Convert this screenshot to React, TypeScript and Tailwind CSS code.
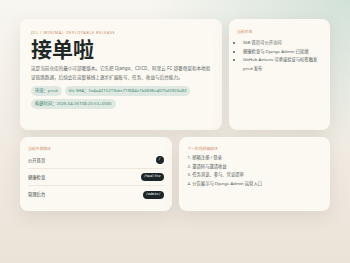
export default function App() {
  const chips = [
    "环境：prod",
    "Git SHA：5e4a4215219cbc71f684e1b0696c4075d3903a82",
    "构建时间：2026-04-05T08:25:53+0000",
  ];
  const paths = [
    { name: "公开首页", path: "/" },
    { name: "健康检查", path: "/healthz" },
    { name: "管理后台", path: "/admin/" },
  ];
  const modules = [
    "邮箱注册 / 登录",
    "邀请码与邀请收益",
    "任务浏览、参与、凭证提审",
    "公告展示与 Django Admin 运营入口",
  ];

  return (
    <div className="min-h-screen w-full px-[20px] pt-[19px] font-['Noto_Sans','Noto_Sans_CJK_SC',sans-serif] text-[#2a3331] bg-[radial-gradient(ellipse_at_100%_0%,#d2e1d8_0%,rgba(210,225,216,0)_40%),linear-gradient(180deg,#f8f6f1_0%,#f1ebe3_55%,#ebe3d8_100%)]">
      <div className="grid grid-cols-[2fr_1fr] gap-[7px]">
        <div className="h-[111px] rounded-[8px] bg-[#fcf9f3] px-[11px] pt-[11px] shadow-[0_6px_18px_rgba(110,90,70,0.13)]">
          <div className="text-[3.8px] leading-[5px] tracking-[0.15em] uppercase text-[#cf8c63]">
            JDL / Minimal deployable release
          </div>
          <h1 className="mt-[1px] text-[21px] leading-[26px] font-bold text-[#1e2827]">接单啦</h1>
          <p className="mt-[2px] text-[4.6px] leading-[8.5px] text-[#5d6663]">
            这是当前仓库的最小可部署版本。它先把 Django、CI/CD、阿里云 FC 部署骨架和本地验证链路跑通，后续会在这套基线上逐步扩展账号、任务、收益与后台能力。
          </p>
          <div className="mt-[5px] flex flex-wrap gap-[3px]">
            {chips.map((c) => (
              <span
                key={c}
                className="flex h-[10px] items-center rounded-full bg-[#dfe9e2] px-[4px] text-[4.2px] tracking-[0.1px] text-[#3b8572]"
              >
                {c}
              </span>
            ))}
          </div>
        </div>

        <div className="h-[111px] rounded-[8px] bg-[#fcf9f3] px-[8px] pt-[10px] shadow-[0_6px_18px_rgba(110,90,70,0.13)]">
          <div className="text-[3.8px] leading-[5px] text-[#cf8c63]">当前状态</div>
          <ul className="mt-[4px] list-disc pl-[6px] text-[4.3px] leading-[8.5px] text-[#4f5957]">
            <li>SSR 首页可公开访问</li>
            <li>健康检查与 Django Admin 已就绪</li>
            <li>GitHub Actions 可承接验证与标签触发 prod 发布</li>
          </ul>
        </div>
      </div>

      <div className="mt-[7px] grid grid-cols-2 gap-[7px]">
        <div className="h-[74px] rounded-[8px] bg-[#fcf9f3] px-[8px] pt-[9px] shadow-[0_6px_18px_rgba(110,90,70,0.13)]">
          <div className="text-[3.8px] leading-[5px] text-[#cf8c63]">当前开放路径</div>
          <div className="mt-[1px]">
            {paths.map((p, i) => (
              <div
                key={p.path}
                className={
                  "flex h-[17px] items-center justify-between text-[4.3px] text-[#3c4543] " +
                  (i < paths.length - 1 ? "border-b border-[#ece6dc]" : "")
                }
              >
                <span>{p.name}</span>
                <span
                  className={
                    "flex h-[8px] items-center justify-center rounded-full bg-[#1c2626] font-['DejaVu_Sans_Mono',monospace] text-[3.5px] text-white " +
                    (p.path === "/" ? "w-[8px]" : "px-[3px]")
                  }
                >
                  {p.path}
                </span>
              </div>
            ))}
          </div>
        </div>

        <div className="h-[74px] rounded-[8px] bg-[#fcf9f3] px-[9px] pt-[9px] shadow-[0_6px_18px_rgba(110,90,70,0.13)]">
          <div className="text-[3.8px] leading-[5px] text-[#cf8c63]">下一阶段预留模块</div>
          <ol className="mt-[2px] text-[4.3px] leading-[8.5px] text-[#4f5957]">
            {modules.map((m, i) => (
              <li key={m}>
                {i + 1}. {m}
              </li>
            ))}
          </ol>
        </div>
      </div>
    </div>
  );
}
